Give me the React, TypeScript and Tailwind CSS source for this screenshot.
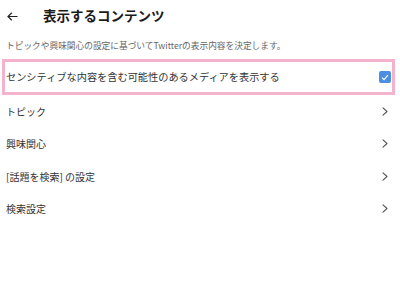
import React from "react";

const font = { fontFamily: '"Noto Sans CJK JP", "Noto Sans", sans-serif' };

function Chevron() {
  return (
    <svg width="6" height="9" viewBox="0 0 6 9" fill="none">
      <path d="M1 0.8 L5 4.5 L1 8.2" stroke="#555" strokeWidth="1.1" strokeLinecap="round" strokeLinejoin="round" />
    </svg>
  );
}

export default function App() {
  const rows = ["トピック", "興味関心", "[話題を検索] の設定", "検索設定"];
  return (
    <div className="w-[400px] h-[283px] bg-white overflow-hidden font-['Noto_Sans_CJK_JP',sans-serif]" style={font}>
      <div className="h-[32px] flex items-center pl-[7px]">
        <svg width="11" height="9" viewBox="0 0 11 9" fill="none">
          <path d="M10.5 4.5 H1 M4.8 0.8 L1 4.5 L4.8 8.2" stroke="#222" strokeWidth="1.2" />
        </svg>
        <span className="ml-[25px] text-[13.5px] font-bold text-[#1a1a1a] leading-none">表示するコンテンツ</span>
      </div>
      <div className="h-[27px] flex items-center pl-[6px] text-[8.7px] text-[#666]">
        トピックや興味関心の設定に基づいてTwitterの表示内容を決定します。
      </div>
      <div className="ml-[2px] w-[393px] h-[36px] border-[3px] border-[#f4b3cd] flex items-center justify-between pl-[1px] pr-[1px]">
        <span className="text-[10.2px] text-[#333]">センシティブな内容を含む可能性のあるメディアを表示する</span>
        <div className="w-[12px] h-[12px] rounded-[2px] bg-[#4a8fe2] flex items-center justify-center">
          <svg width="8" height="7" viewBox="0 0 8 7" fill="none">
            <path d="M1 3.6 L3 5.6 L7 1.2" stroke="white" strokeWidth="1.1" />
          </svg>
        </div>
      </div>
      {rows.map((r) => (
        <div key={r} className="h-[32.5px] flex items-center justify-between pl-[6px] pr-[12px]">
          <span className="text-[10px] text-[#333]">{r}</span>
          <Chevron />
        </div>
      ))}
    </div>
  );
}
